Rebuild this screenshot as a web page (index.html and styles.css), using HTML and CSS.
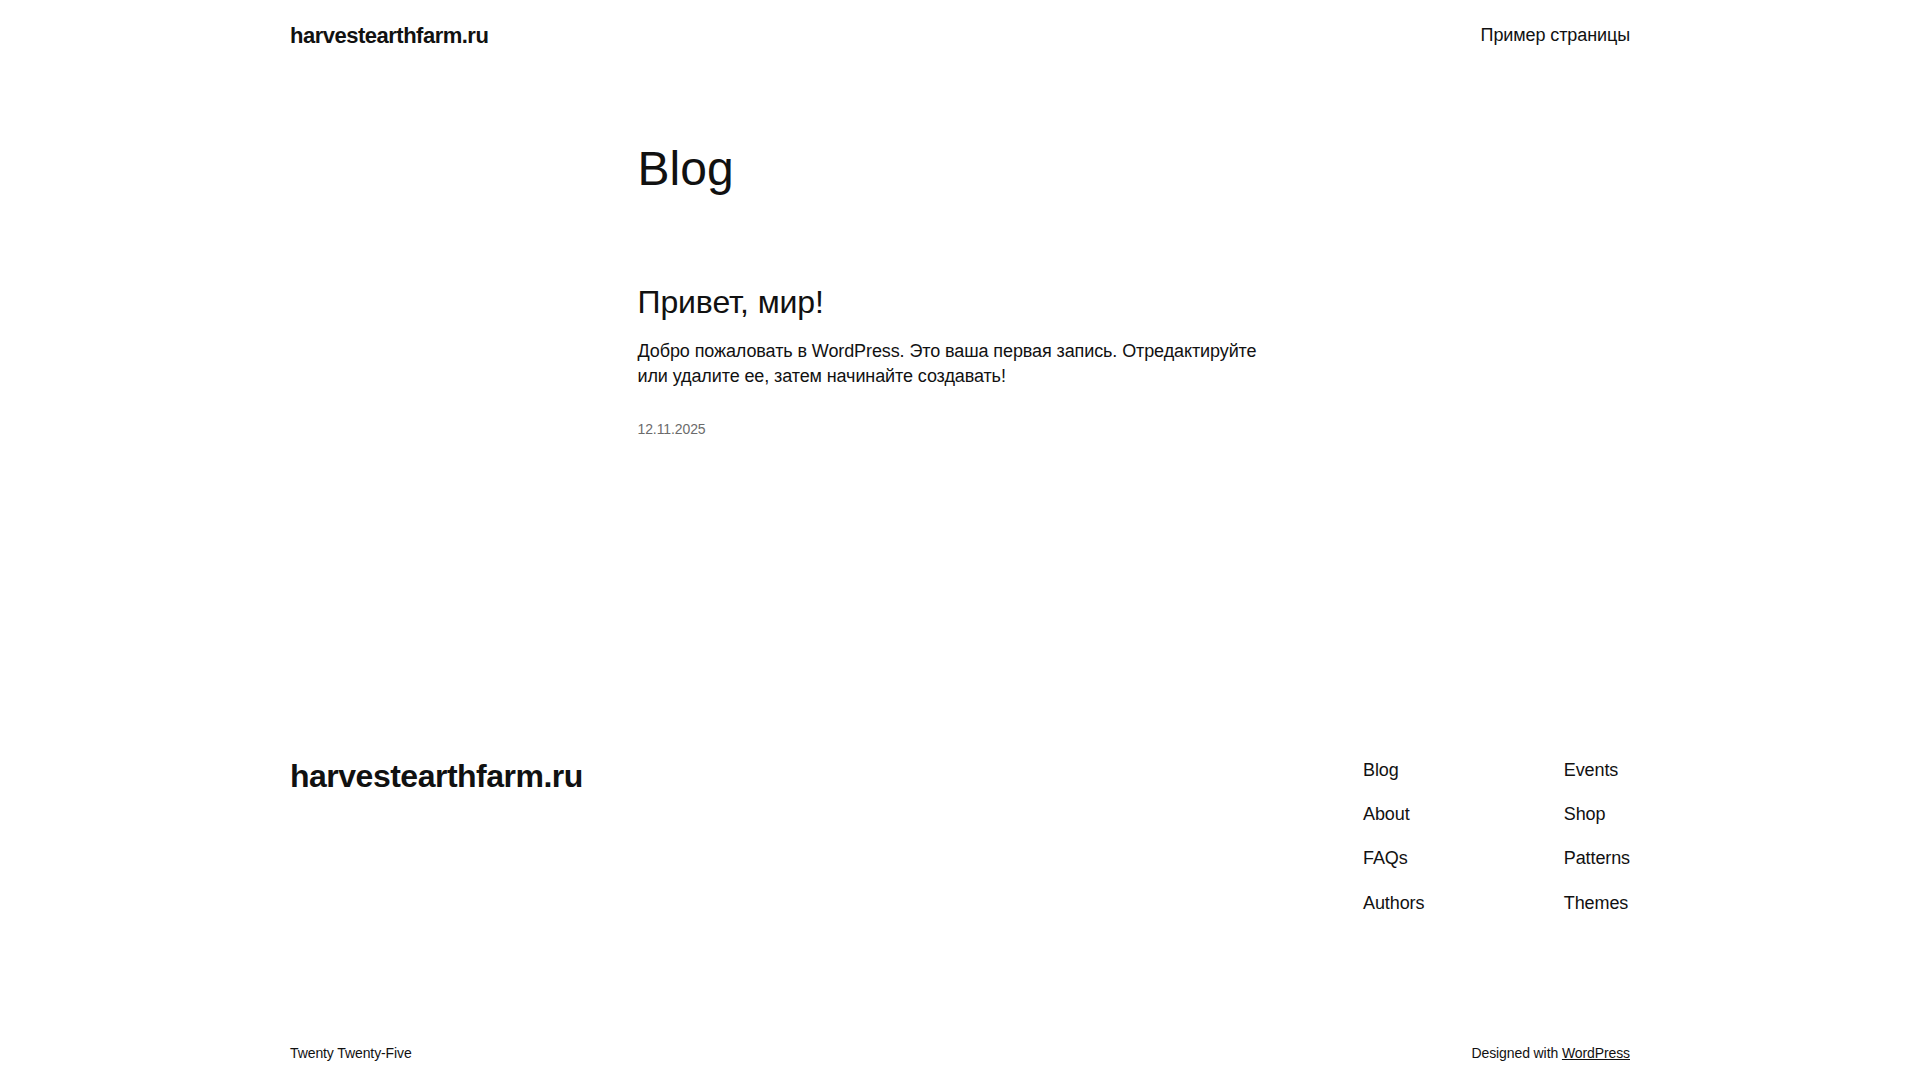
FILE: index.html
```html
<!DOCTYPE html>
<html lang="ru">
<head>
<meta charset="utf-8">
<title>Blog – harvestearthfarm.ru</title>
<link rel="stylesheet" href="styles.css">
</head>
<body>
<header class="site-header">
  <div class="wide">
    <a class="site-title" href="#">harvestearthfarm.ru</a>
    <nav class="header-nav"><a href="#">Пример страницы</a></nav>
  </div>
</header>
<main class="site-main">
  <div class="content">
    <h1 class="page-title">Blog</h1>
    <article class="post">
      <h2 class="post-title"><a href="#">Привет, мир!</a></h2>
      <p class="post-excerpt">Добро пожаловать в WordPress. Это ваша первая запись. Отредактируйте или удалите ее, затем начинайте создавать!</p>
      <time class="post-date">12.11.2025</time>
    </article>
  </div>
</main>
<footer class="site-footer">
  <div class="wide footer-top">
    <a class="footer-title" href="#">harvestearthfarm.ru</a>
    <div class="footer-navs">
      <ul class="footer-nav">
        <li><a href="#">Blog</a></li>
        <li><a href="#">About</a></li>
        <li><a href="#">FAQs</a></li>
        <li><a href="#">Authors</a></li>
      </ul>
      <ul class="footer-nav">
        <li><a href="#">Events</a></li>
        <li><a href="#">Shop</a></li>
        <li><a href="#">Patterns</a></li>
        <li><a href="#">Themes</a></li>
      </ul>
    </div>
  </div>
  <div class="wide footer-bottom">
    <span>Twenty Twenty-Five</span>
    <span>Designed with <a class="u" href="#">WordPress</a></span>
  </div>
</footer>
</body>
</html>
```

FILE: styles.css
```css
html, body {
  margin: 0;
  padding: 0;
  background: #fff;
}
body {
  font-family: "Liberation Sans", Arial, sans-serif;
  font-size: 18px;
  line-height: 1.4;
  letter-spacing: -0.1px;
  color: #111;
}
a {
  color: inherit;
  text-decoration: none;
}
.wide {
  width: 1340px;
  margin: 0 auto;
}
.site-header {
  padding-top: 2px;
}
.site-header .wide {
  display: flex;
  justify-content: space-between;
  align-items: center;
  height: 68px;
}
.site-title {
  font-size: 22px;
  font-weight: 700;
  letter-spacing: -0.5px;
  line-height: 1.2;
}
.header-nav {
  font-size: 18px;
}
.site-main .content {
  width: 645px;
  margin: 0 auto;
  padding-top: 72px;
  padding-bottom: 318px;
}
.page-title {
  margin: 0;
  font-size: 48px;
  font-weight: 400;
  line-height: 1.125;
  letter-spacing: 0;
}
.post {
  margin-top: 88px;
}
.post-title {
  margin: 0;
  font-size: 32px;
  font-weight: 400;
  line-height: 1.125;
  letter-spacing: -0.1px;
}
.post-excerpt {
  margin: 19px 0 0;
}
.post-date {
  display: block;
  margin-top: 31px;
  font-size: 14px;
  color: #6b6b6b;
}
.footer-top {
  display: flex;
  justify-content: space-between;
  align-items: flex-start;
}
.footer-title {
  font-size: 32px;
  font-weight: 700;
  letter-spacing: -0.5px;
  line-height: 1.125;
}
.footer-navs {
  display: flex;
  width: 267px;
  justify-content: space-between;
}
.footer-nav {
  list-style: none;
  margin: 0;
  padding: 0;
  display: flex;
  flex-direction: column;
  gap: 19px;
}
.footer-bottom {
  display: flex;
  justify-content: space-between;
  font-size: 14px;
  margin-top: 128px;
  padding-bottom: 25px;
}
.u {
  text-decoration: underline;
}
```
